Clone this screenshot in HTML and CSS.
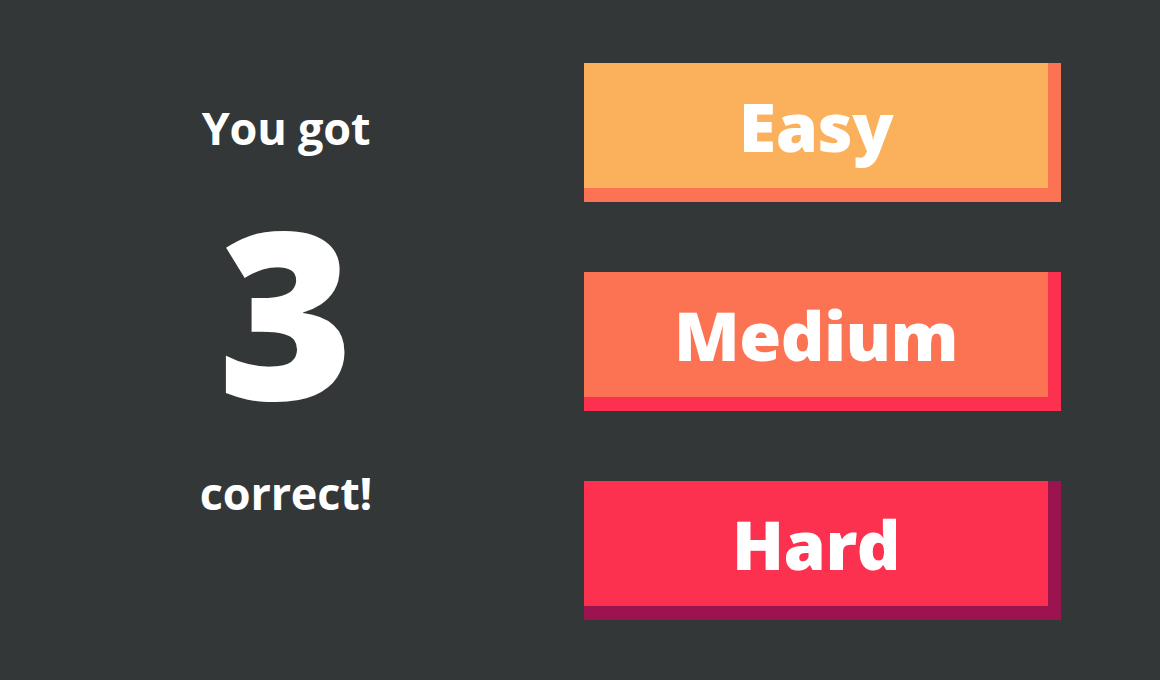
FILE: index.html
```html
<!DOCTYPE html>
<html>
<head>
<meta charset="utf-8">
<link rel="stylesheet" href="styles.css">
</head>
<body>
<main class="screen">
  <section class="score">
    <p class="score-label">You got</p>
    <p class="score-number">3</p>
    <p class="score-label">correct!</p>
  </section>
  <section class="levels">
    <button class="level level-easy">Easy</button>
    <button class="level level-medium">Medium</button>
    <button class="level level-hard">Hard</button>
  </section>
</main>
</body>
</html>
```
FILE: styles.css
```css
html, body {
  margin: 0;
  padding: 0;
  background: #343738;
}
.screen {
  width: 1160px;
  height: 680px;
  box-sizing: border-box;
  display: flex;
  padding: 63px 99px 59px 0;
  font-family: "Open Sans", "Noto Sans", sans-serif;
  color: #ffffff;
}
.score {
  width: 572px;
  display: flex;
  flex-direction: column;
  align-items: center;
  justify-content: flex-start;
}
.score p {
  margin: 0;
}
.score-label {
  font-size: 45px;
  font-weight: 700;
  line-height: 60px;
  letter-spacing: -0.2px;
}
.score-label:first-child {
  margin-top: 35px;
}
.score-number {
  font-size: 232px;
  font-weight: 800;
  line-height: 180px;
  margin: 62px 0 63px !important;
}
.levels {
  margin-left: 12px;
  display: flex;
  flex-direction: column;
  gap: 70px;
}
.level {
  width: 477px;
  height: 139px;
  box-sizing: border-box;
  border: none;
  border-right: 13px solid;
  border-bottom: 14px solid;
  padding: 0;
  margin: 0;
  font-family: "Open Sans", "Noto Sans", sans-serif;
  font-size: 68px;
  font-weight: 800;
  color: #ffffff;
  display: flex;
  align-items: center;
  justify-content: center;
  letter-spacing: -0.5px;
}
.level-easy {
  background: #fbb05b;
  border-color: #fc7353;
}
.level-medium {
  background: #fc7353;
  border-color: #fb314f;
}
.level-hard {
  background: #fb314f;
  border-color: #9b1450;
}
```
